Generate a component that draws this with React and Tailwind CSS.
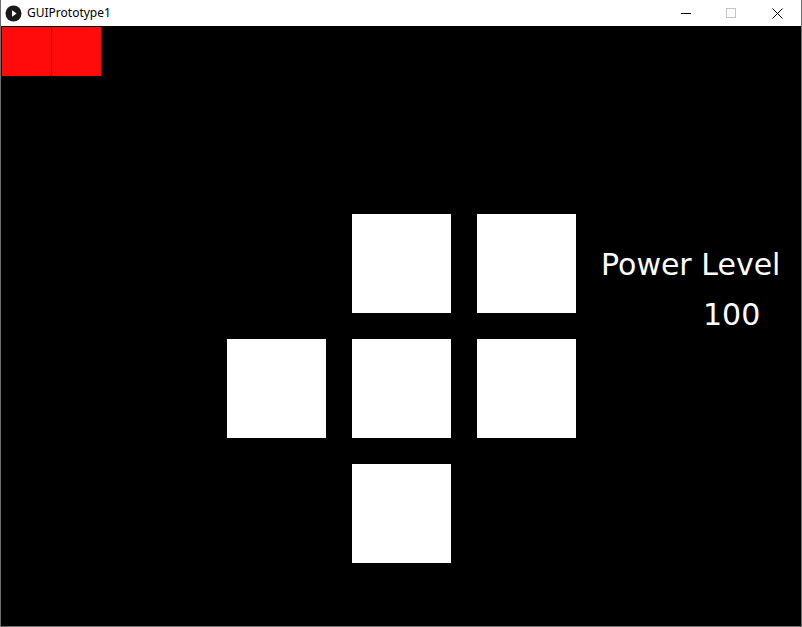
import React from 'react';

// Window chrome + sketch canvas
function TitleBar() {
  return (
    <div className="h-[26px] bg-white flex items-center shrink-0">
      <svg className="ml-[4px]" width="17" height="17" viewBox="0 0 17 17">
        <circle cx="8.5" cy="8.5" r="8" fill="#1a1a1a" />
        <path d="M7 5.2 L11.6 8.5 L7 11.8 Z" fill="#fff" />
      </svg>
      <span className="ml-[5px] text-[12px] text-black font-['Noto_Sans',sans-serif] leading-none">GUIPrototype1</span>
      <div className="ml-auto flex items-center h-full">
        <svg className="mr-[35px]" width="10" height="10" viewBox="0 0 10 10">
          <path d="M0 5.5 H10" stroke="#000" strokeWidth="1" />
        </svg>
        <svg className="mr-[36px]" width="10" height="10" viewBox="0 0 10 10">
          <rect x="0.5" y="0.5" width="9" height="9" fill="none" stroke="#c4c4c4" strokeWidth="1" />
        </svg>
        <svg className="mr-[18px]" width="11" height="11" viewBox="0 0 11 11">
          <path d="M0.5 0.5 L10.5 10.5 M10.5 0.5 L0.5 10.5" stroke="#000" strokeWidth="1" />
        </svg>
      </div>
    </div>
  );
}

const cells = [
  false, true, true,
  true, true, true,
  false, true, false,
];

export default function App() {
  return (
    <div className="w-[802px] h-[627px] flex flex-col border-x border-b border-[#6e6e6e] bg-white overflow-hidden">
      <TitleBar />
      <div className="flex-1 bg-black flex flex-col">
        {/* red toggle buttons */}
        <div className="flex gap-[1px] pl-[1px] pt-[1px]">
          <div className="w-[49px] h-[49px] bg-[#ff0b0b]" />
          <div className="w-[49px] h-[49px] bg-[#ff0b0b]" />
        </div>

        <div className="flex mt-[138px] pl-[226px]">
          <div className="grid grid-cols-[99px_99px_99px] auto-rows-[99px] gap-[26px]">
            {cells.map((on, i) => (
              <div key={i} className={on ? 'bg-white' : 'bg-black'} />
            ))}
          </div>
          <div className="ml-[25px] mt-[26px] flex flex-col items-start text-white font-['DejaVu_Sans',sans-serif] text-[30px] leading-[50px]">
            <span>Power Level</span>
            <span className="ml-[102px]">100</span>
          </div>
        </div>
      </div>
    </div>
  );
}
